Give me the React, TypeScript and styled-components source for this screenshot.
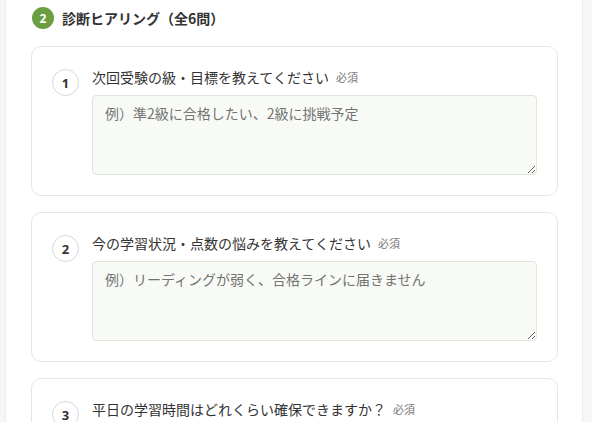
import React from "react";
import styled, { createGlobalStyle } from "styled-components";

const Global = createGlobalStyle`
  html, body { margin: 0; padding: 0; background: #f6f6f6; }
  body { font-family: "Noto Sans CJK JP", "Noto Sans", sans-serif; color: #333; }
  * { box-sizing: border-box; }
`;

const Panel = styled.div`
  margin: 0 9px 0 5px;
  background: #fff;
  border-left: 1px solid #ececec;
  border-right: 1px solid #ececec;
  padding: 7px 24px 20px 25px;
  height: 422px;
  overflow: hidden;
`;

const Heading = styled.div`
  display: flex;
  align-items: center;
  gap: 8px;
  margin-left: 1px;
  margin-bottom: 17px;
`;

const StepBadge = styled.span`
  width: 22px;
  height: 22px;
  border-radius: 50%;
  background: #6b9e40;
  color: #fff;
  font-size: 12px;
  font-weight: 700;
  display: flex;
  align-items: center;
  justify-content: center;
  font-family: "Noto Sans", sans-serif;
`;

const HeadingText = styled.h2`
  margin: 0;
  font-size: 14px;
  font-weight: 700;
  color: #333;
  line-height: 22px;
`;

const List = styled.div`
  display: flex;
  flex-direction: column;
  gap: 16px;
`;

const Card = styled.div`
  display: flex;
  gap: 13px;
  border: 1px solid #e6e6e6;
  border-radius: 10px;
  padding: 20px;
  background: #fff;
`;

const NumCircle = styled.span`
  flex: none;
  width: 27px;
  height: 27px;
  margin-top: 2px;
  border-radius: 50%;
  border: 1.5px solid #d6d6d6;
  display: flex;
  align-items: center;
  justify-content: center;
  font-size: 13px;
  font-weight: 700;
  color: #333;
  font-family: "Noto Sans", sans-serif;
`;

const Body = styled.div`
  flex: 1;
  display: flex;
  flex-direction: column;
  gap: 8px;
`;

const Question = styled.label`
  display: flex;
  align-items: center;
  gap: 7px;
  font-size: 14px;
  line-height: 20px;
  color: #333;
`;

const Required = styled.span`
  font-size: 11px;
  color: #777;
`;

const Answer = styled.textarea`
  width: 100%;
  height: 80px;
  border: 1px solid #dfe5da;
  border-radius: 4px;
  background: #f8fbf5;
  padding: 7px 12px;
  font-family: "Noto Sans CJK JP", "Noto Sans", sans-serif;
  font-size: 14px;
  line-height: 1.5;
  color: #333;
  display: block;
  &::placeholder { color: #737373; }
`;

const questions = [
  { q: "次回受験の級・目標を教えてください", ph: "例）準2級に合格したい、2級に挑戦予定" },
  { q: "今の学習状況・点数の悩みを教えてください", ph: "例）リーディングが弱く、合格ラインに届きません" },
  { q: "平日の学習時間はどれくらい確保できますか？", ph: "" },
];

export default function App() {
  return (
    <>
      <Global />
      <Panel>
        <Heading>
          <StepBadge>2</StepBadge>
          <HeadingText>診断ヒアリング（全6問）</HeadingText>
        </Heading>
        <List>
          {questions.map((item, i) => (
            <Card key={i}>
              <NumCircle>{i + 1}</NumCircle>
              <Body>
                <Question>
                  {item.q}
                  <Required>必須</Required>
                </Question>
                <Answer placeholder={item.ph} />
              </Body>
            </Card>
          ))}
        </List>
      </Panel>
    </>
  );
}
